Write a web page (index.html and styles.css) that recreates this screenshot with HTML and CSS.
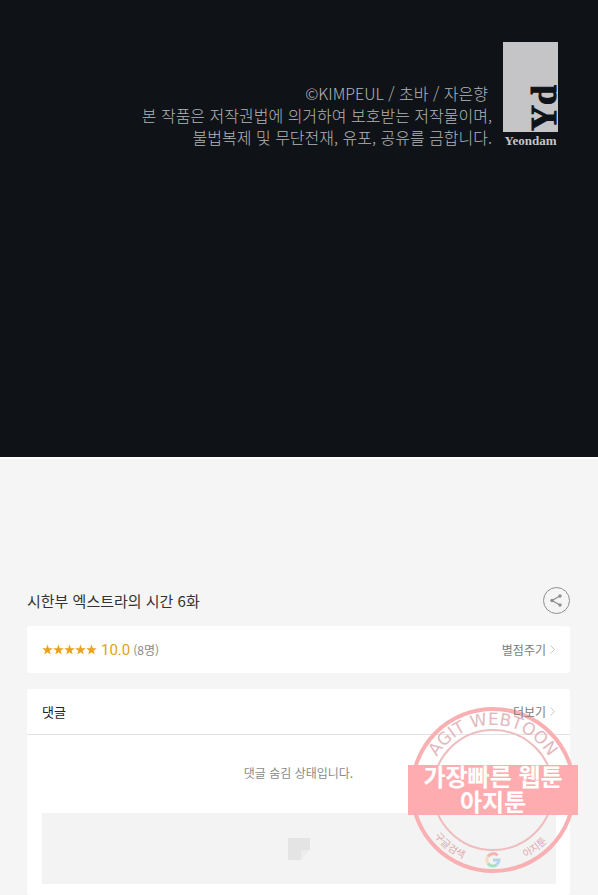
FILE: index.html
```html
<!DOCTYPE html>
<html lang="ko">
<head>
    <meta charset="UTF-8">
    <meta name="viewport" content="width=device-width, initial-scale=1.0">
    <title>시한부 엑스트라의 시간 6화</title>
    <link rel="stylesheet" href="styles.css">
</head>
<body>
    <section class="credit">
        <p class="copyright">
            <span class="authors">©KIMPEUL / 초바 / 자은향</span>
            <span>본 작품은 저작권법에 의거하여 보호받는 저작물이며,</span>
            <span>불법복제 및 무단전재, 유포, 공유를 금합니다.</span>
        </p>
        <div class="publisher">
            <svg class="publisher-logo" width="55" height="90" viewBox="0 0 55 90" aria-hidden="true">
                <rect width="55" height="90" fill="#c5c5c7"/>
                <text class="logo-letters" transform="translate(53 89) rotate(-90)">Yd</text>
            </svg>
            <span class="publisher-name">Yeondam</span>
        </div>
    </section>

    <main class="episode">
        <div class="title-row">
            <h1>시한부 엑스트라의 시간 6화</h1>
            <button class="share" type="button" aria-label="공유">
                <svg width="27" height="27" viewBox="0 0 27 27" fill="none" stroke="#8e8e8e">
                    <circle cx="13.5" cy="13.5" r="13"/>
                    <path d="M17 9 9 13.500l8 4.500" stroke-width="1.300"/>
                    <g fill="#8e8e8e" stroke="none">
                        <circle cx="17" cy="9" r="1.700"/>
                        <circle cx="9" cy="13.500" r="1.700"/>
                        <circle cx="17" cy="18" r="1.700"/>
                    </g>
                </svg>
            </button>
        </div>

        <section class="card rating">
            <svg class="stars" width="55" height="12" viewBox="0 0 55 12" fill="#e9a21b" aria-hidden="true">
                <defs>
                    <path id="star" d="M5.500 .500 6.800 4.300H10.800L7.600 6.700 8.800 10.600 5.500 8.200 2.200 10.600 3.400 6.700 .200 4.300H4.200z"/>
                </defs>
                <use href="#star"/>
                <use href="#star" x="11"/>
                <use href="#star" x="22"/>
                <use href="#star" x="33"/>
                <use href="#star" x="44"/>
            </svg>
            <strong class="score">10.0</strong>
            <span class="count">(8명)</span>
            <a class="more" href="#">별점주기
                <svg width="5" height="9" viewBox="0 0 5 9" fill="none" stroke="#c8c8c8"><path d="M.500 .500l4 4-4 4"/></svg>
            </a>
        </section>

        <section class="card comments">
            <header class="comments-head">
                <h2>댓글</h2>
                <a class="more" href="#">더보기
                    <svg width="5" height="9" viewBox="0 0 5 9" fill="none" stroke="#c8c8c8"><path d="M.500 .500l4 4-4 4"/></svg>
                </a>
            </header>
            <p class="hidden-message">댓글 숨김 상태입니다.</p>
            <div class="placeholder">
                <svg width="22" height="22" viewBox="0 0 22 22" aria-hidden="true">
                    <path d="M0 0h22v12h-7q-2 0-2 2v8H0z" fill="#e4e4e4"/>
                    <path d="M13 22v-8q0-2 2-2h7z" fill="#ededed"/>
                </svg>
            </div>

            <!-- stamp -->
            <svg class="stamp" width="170" height="168" viewBox="0 0 170 168">
                <defs>
                    <path id="arc-top" d="M20 84a65 65 0 0 1 130 0"/>
                    <path id="arc-bottom" d="M10 84a75 75 0 0 0 150 0"/>
                </defs>
                <circle cx="85" cy="84" r="81" fill="none" stroke="#f9b0b3" stroke-width="4"/>
                <circle cx="85" cy="84" r="60" fill="none" stroke="#efbcbf" stroke-width="2"/>
                <text class="stamp-latin"><textPath href="#arc-top" startOffset="50%">AGIT WEBTOON</textPath></text>
                <text class="stamp-small"><textPath href="#arc-bottom" startOffset="29%">구글검색</textPath></text>
                <text class="stamp-small"><textPath href="#arc-bottom" startOffset="70%">아지툰</textPath></text>
                <rect y="59" width="170" height="50" fill="#ffacb0"/>
                <text class="stamp-main" x="85" y="80">가장빠른 웹툰</text>
                <text class="stamp-main" x="85" y="105">아지툰</text>
                <g fill="none" stroke-width="3">
                    <path d="M89.500 149.500A6 6 0 0 0 80 150.500" stroke="#f3b5b0"/>
                    <path d="M80 150.500a6 6 0 0 0 0 7" stroke="#f6dcba"/>
                    <path d="M80 157.500a6 6 0 0 0 8.500 1.200" stroke="#b0dcc4"/>
                    <path d="M88.500 158.700a6 6 0 0 0 2.500-4.700h-6" stroke="#b5d3ea"/>
                </g>
            </svg>
        </section>
    </main>
</body>
</html>
```

FILE: styles.css
```css
* {
    box-sizing: border-box;
}
body {
    margin: 0;
    min-height: 100vh;
    display: flex;
    flex-direction: column;
    background: #f5f5f5;
    color: #333;
    font-family: "Noto Sans CJK KR", sans-serif;
}
h1, h2, p {
    margin: 0;
    font-weight: 400;
}
.credit {
    display: flex;
    justify-content: flex-end;
    gap: 11px;
    padding: 42px 40px 308px;
    background: #0f1317;
    border-bottom: 2px solid #fff;
}
.copyright {
    display: flex;
    flex-direction: column;
    align-items: flex-end;
    padding-top: 40px;
    color: #b4b5b8;
    font-size: 16px;
    font-weight: 300;
    line-height: 22px;
}
.authors {
    padding-right: 4px;
}
.publisher {
    display: flex;
    flex-direction: column;
    align-items: center;
    width: 55px;
}
.publisher-logo {
    display: block;
}
.logo-letters {
    font: bold 36px "Liberation Serif", serif;
    fill: #0f1317;
    stroke: #0f1317;
    stroke-width: 1px;
}
.publisher-name {
    color: #c5c5c7;
    font: bold 13px/17px "Liberation Serif", serif;
}
.episode {
    flex: 1;
    display: flex;
    flex-direction: column;
    padding: 128px 28px 0 27px;
}
.title-row {
    display: flex;
    justify-content: space-between;
    align-items: center;
    margin-bottom: 12px;
}
.title-row h1 {
    font-size: 15px;
    line-height: 27px;
}
.share {
    width: 27px;
    height: 27px;
    padding: 0;
    border: none;
    background: none;
    cursor: pointer;
}
.share svg {
    display: block;
}
.card {
    background: #fff;
    border-radius: 3px;
}
.rating {
    display: flex;
    align-items: center;
    height: 47px;
    margin-bottom: 16px;
    padding: 0 15px;
}
.score {
    margin: 0 3px 0 4px;
    color: #e0a020;
    font: 400 15px Roboto, sans-serif;
}
.count {
    color: #8a8a8a;
    font-size: 12px;
}
.more {
    z-index: 1;
    display: flex;
    align-items: center;
    gap: 4px;
    margin-left: auto;
    color: #7c7c7c;
    font-size: 12px;
    text-decoration: none;
}
.comments {
    position: relative;
    flex: 1;
}
.comments-head {
    display: flex;
    align-items: center;
    height: 46px;
    padding: 0 15px;
    border-bottom: 1px solid #e2e2e2;
}
.comments-head h2 {
    color: #222;
    font-size: 13px;
}
.hidden-message {
    padding: 28px 0 30px;
    color: #8a8a8a;
    font-size: 12px;
    line-height: 20px;
    text-align: center;
}
.placeholder {
    display: flex;
    justify-content: center;
    align-items: center;
    height: 71px;
    margin: 0 14px 0 15px;
    background: #f3f3f3;
}
.stamp {
    position: absolute;
    top: 17px;
    right: -8px;
    pointer-events: none;
}
.stamp text {
    text-anchor: middle;
}
.stamp-latin {
    font: 17px "DejaVu Sans", sans-serif;
    fill: #e3b9bd;
}
.stamp-small {
    font-size: 10px;
    fill: #dfa9ad;
}
.stamp-main {
    font-size: 24px;
    font-weight: 700;
    fill: #fff;
}
```
